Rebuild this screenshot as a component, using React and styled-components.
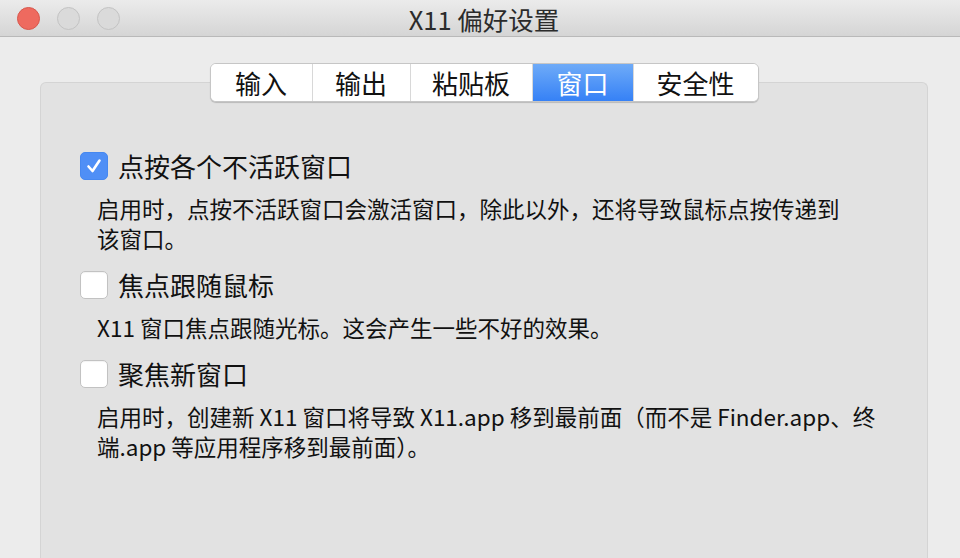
import React from 'react';
import styled, { createGlobalStyle } from 'styled-components';

const GlobalStyle = createGlobalStyle`
    html, body {
        margin: 0;
        padding: 0;
        background: #ececec;
        font-family: "Noto Sans CJK SC", "Liberation Sans", sans-serif;
        color: #111;
    }
`;

const Window = styled.div`
    width: 960px;
    height: 558px;
    overflow: hidden;
    display: flex;
    flex-direction: column;
    background: #ececec;
`;

const TitleBar = styled.div`
    height: 37px;
    flex-shrink: 0;
    display: flex;
    align-items: center;
    position: relative;
    background: linear-gradient(#ebebeb, #d5d5d5);
    border-bottom: 1px solid #b9b9b9;
    box-sizing: border-box;
`;

const Lights = styled.div`
    display: flex;
    gap: 17px;
    padding-left: 17px;
`;

const Light = styled.span`
    width: 23px;
    height: 23px;
    border-radius: 50%;
    box-sizing: border-box;
    background: ${p => (p.red ? '#ee6a5f' : '#dadada')};
    border: 1px solid ${p => (p.red ? '#d8574c' : '#c3c3c3')};
`;

// centred over the panel, a few px right of the window middle
const Title = styled.div`
    position: absolute;
    left: 8px;
    right: 0;
    text-align: center;
    font-size: 25.5px;
    line-height: 37px;
    color: #2b2b2b;
    pointer-events: none;
`;

const Body = styled.div`
    flex: 1;
    padding: 26px 32px 0 40px;
    display: flex;
    flex-direction: column;
`;

const TabBar = styled.div`
    display: flex;
    justify-content: center;
    position: relative;
    z-index: 1;
`;

const Tabs = styled.div`
    display: flex;
    height: 39px;
    background: #fff;
    border-radius: 6px;
    border: 1px solid #c6c6c6;
    box-shadow: 0 1px 1px rgba(0, 0, 0, 0.18);
    overflow: hidden;
    box-sizing: border-box;
`;

const Tab = styled.div`
    width: ${p => p.w}px;
    display: flex;
    align-items: center;
    justify-content: center;
    font-size: 26px;
    box-sizing: border-box;
    border-left: ${p => (p.first ? 'none' : '1px solid #d8d8d8')};
    color: ${p => (p.active ? '#fff' : '#111')};
    background: ${p => (p.active ? 'linear-gradient(#6eabf8, #3681f6)' : '#fff')};
`;

const Panel = styled.div`
    flex: 1;
    margin-top: -20px;
    background: #e2e2e2;
    border: 1px solid #d4d4d4;
    border-bottom: none;
    border-radius: 6px 6px 0 0;
    padding: 69px 0 0 39px;
`;

const Option = styled.div`
    margin-bottom: 18px;
`;

const Row = styled.label`
    display: flex;
    align-items: center;
    gap: 10px;
    height: 28px;
`;

const Box = styled.span`
    width: 28px;
    height: 28px;
    border-radius: 5px;
    box-sizing: border-box;
    display: flex;
    align-items: center;
    justify-content: center;
    background: ${p => (p.checked ? '#4f8ff6' : '#fff')};
    border: 1px solid ${p => (p.checked ? '#4688f0' : '#c2c2c2')};
    box-shadow: ${p => (p.checked ? 'none' : 'inset 0 1px 1px rgba(0,0,0,0.05)')};
`;

const Label = styled.span`
    font-size: 26px;
    line-height: 28px;
    color: #111;
`;

const Desc = styled.p`
    margin: 13px 0 0 17px;
    font-size: 22.5px;
    line-height: 30px;
    color: #111;
`;

const Check = () => (
    <svg width="18" height="18" viewBox="0 0 18 18">
        <path d="M3.5 9.5 L7.5 14 L14.5 3.5" fill="none" stroke="#fff" strokeWidth="2.6" strokeLinecap="round" strokeLinejoin="round" />
    </svg>
);

const tabs = [
    { name: '输入', w: 101 },
    { name: '输出', w: 98 },
    { name: '粘贴板', w: 122 },
    { name: '窗口', w: 101, active: true },
    { name: '安全性', w: 125 },
];

const options = [
    {
        label: '点按各个不活跃窗口',
        checked: true,
        lines: ['启用时，点按不活跃窗口会激活窗口，除此以外，还将导致鼠标点按传递到', '该窗口。'],
    },
    {
        label: '焦点跟随鼠标',
        lines: ['X11 窗口焦点跟随光标。这会产生一些不好的效果。'],
    },
    {
        label: '聚焦新窗口',
        lines: ['启用时，创建新 X11 窗口将导致 X11.app 移到最前面（而不是 Finder.app、终', '端.app 等应用程序移到最前面）。'],
    },
];

const App = () => {
    return (
        <Window>
            <GlobalStyle />
            <TitleBar>
                <Lights>
                    <Light red />
                    <Light />
                    <Light />
                </Lights>
                <Title>X11 偏好设置</Title>
            </TitleBar>
            <Body>
                <TabBar>
                    <Tabs>
                        {tabs.map((t, i) => (
                            <Tab key={t.name} w={t.w} first={i === 0} active={t.active}>
                                {t.name}
                            </Tab>
                        ))}
                    </Tabs>
                </TabBar>
                <Panel>
                    {options.map(o => (
                        <Option key={o.label}>
                            <Row>
                                <Box checked={o.checked}>{o.checked && <Check />}</Box>
                                <Label>{o.label}</Label>
                            </Row>
                            <Desc>
                                {o.lines.map((l, i) => (
                                    <React.Fragment key={i}>
                                        {i > 0 && <br />}
                                        {l}
                                    </React.Fragment>
                                ))}
                            </Desc>
                        </Option>
                    ))}
                </Panel>
            </Body>
        </Window>
    );
};

export default App;
